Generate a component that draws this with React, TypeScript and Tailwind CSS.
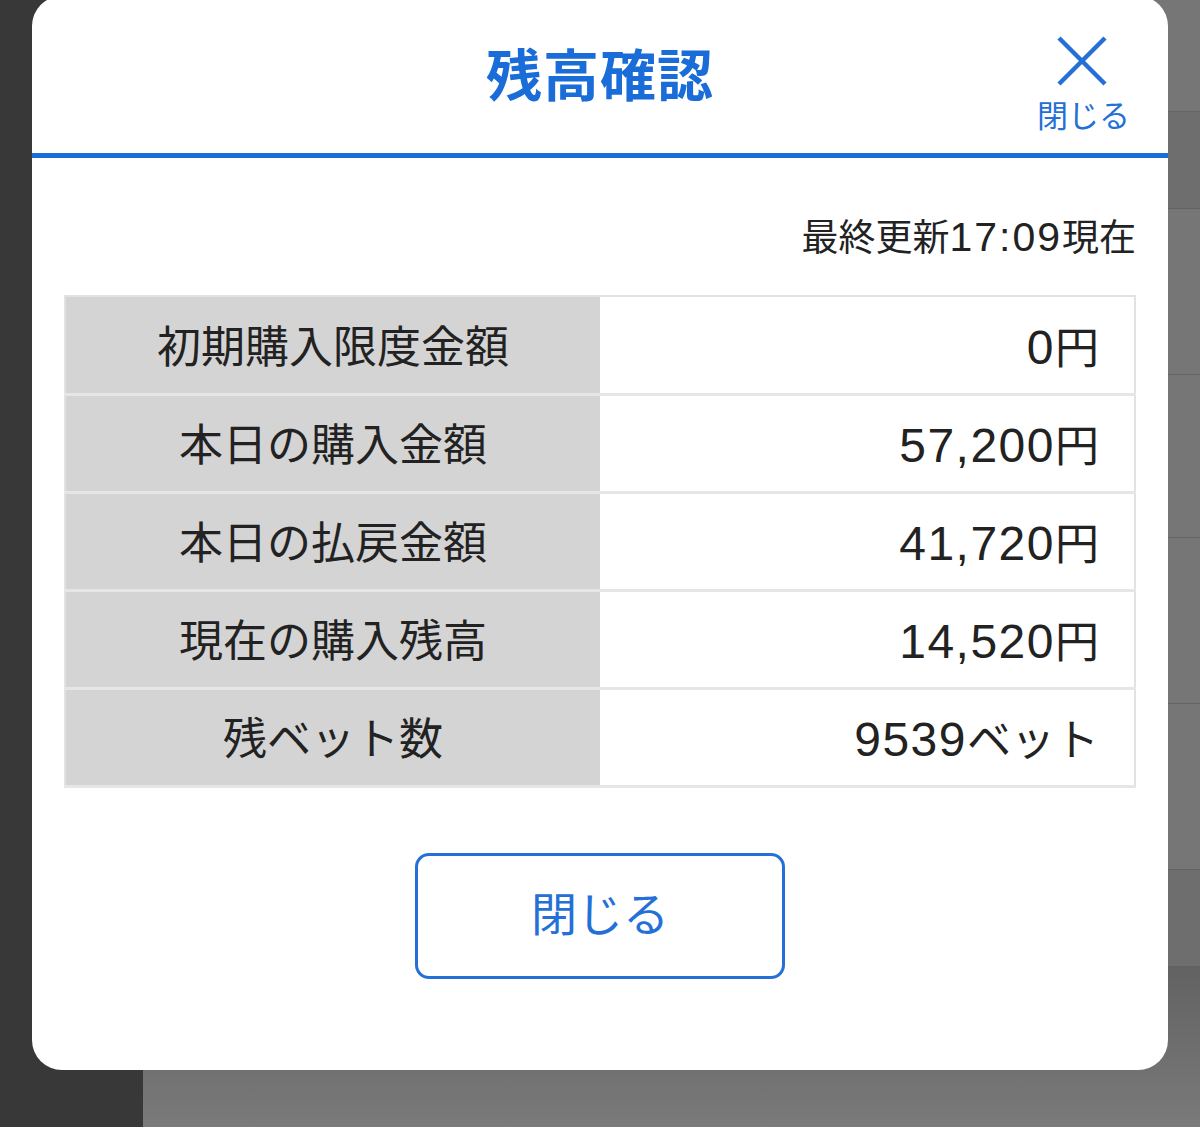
import React from 'react';

interface BalanceRow {
  label: string;
  amount: string;
  unit: string;
}

const rows: BalanceRow[] = [
  { label: '初期購入限度金額', amount: '0', unit: '円' },
  { label: '本日の購入金額', amount: '57,200', unit: '円' },
  { label: '本日の払戻金額', amount: '41,720', unit: '円' },
  { label: '現在の購入残高', amount: '14,520', unit: '円' },
  { label: '残ベット数', amount: '9539', unit: 'ベット' },
];

const font = { fontFamily: '"Liberation Sans", "Noto Sans CJK JP", sans-serif' };

const Backdrop: React.FC = () => (
  <div className="flex h-full w-full">
    <div className="h-full w-[143px] bg-[#383838]" />
    <div className="flex h-full flex-1 flex-col bg-[#767676]">
      <div className="h-[112px] border-b border-[#656565]" />
      <div className="h-[97px] border-b border-[#626262] bg-[#6e6e6e]" />
      <div className="h-[166px] border-b border-[#646464]" />
      <div className="h-[163px] border-b border-[#646464]" />
      <div className="h-[166px] border-b border-[#646464]" />
      <div className="h-[166px] border-b border-[#626262]" />
      <div className="h-[97px] border-b border-[#626262] bg-[#6e6e6e]" />
      <div className="flex-1 bg-gradient-to-b from-[#626262] to-[#7a7a7a]" />
    </div>
  </div>
);

export default function App() {
  return (
    <div className="relative h-[1127px] w-[1200px] overflow-hidden" style={font}>
      <Backdrop />

      <div className="absolute left-[32px] top-[-4px] flex h-[1074px] w-[1136px] flex-col rounded-[30px] bg-white">
        <div className="grid h-[162px] grid-cols-[1fr_auto_1fr] border-b-[5px] border-[#1a6dd8]">
          <div />
          <h1 className="pt-[47px] text-[56px] font-bold leading-[1.2] tracking-[1px] text-[#1a6dd8]">残高確認</h1>
          <div className="flex justify-end pr-[38px]">
            <button className="flex flex-col items-center pt-[40px] text-[#2470d6]">
              <svg width="50" height="50" viewBox="0 0 50 50" fill="none" stroke="currentColor" strokeWidth="4.5" className="mr-[4px]">
                <path d="M2 2 L48 48 M48 2 L2 48" />
              </svg>
              <span className="mt-[12px] text-[31px] leading-[1.2]">閉じる</span>
            </button>
          </div>
        </div>

        <div className="px-[32px]">
          <p className="mt-[55px] text-right text-[37px] leading-[1.2] text-[#222]">
            最終更新<span className="text-[41px] tracking-[2px]">17:09</span>現在
          </p>

          <table className="mt-[33px] w-full border-collapse border-2 border-[#e2e2e2]">
            <tbody>
              {rows.map((row) => (
                <tr key={row.label} className="h-[98px] border-b-[3px] border-[#e6e6e6]">
                  <td className="w-[535px] bg-[#d4d4d4] pt-[6px] text-center text-[44px] text-[#222]">{row.label}</td>
                  <td className="pr-[35px] pt-[6px] text-right text-[44px] text-[#222]">
                    <span className="text-[48px] tracking-[1.5px]">{row.amount}</span>
                    {row.unit}
                  </td>
                </tr>
              ))}
            </tbody>
          </table>

          <div className="mt-[65px] flex justify-center">
            <button className="h-[126px] w-[370px] rounded-[14px] border-[3px] border-[#2470d6] text-[46px] text-[#2470d6]">
              閉じる
            </button>
          </div>
        </div>
      </div>
    </div>
  );
}
